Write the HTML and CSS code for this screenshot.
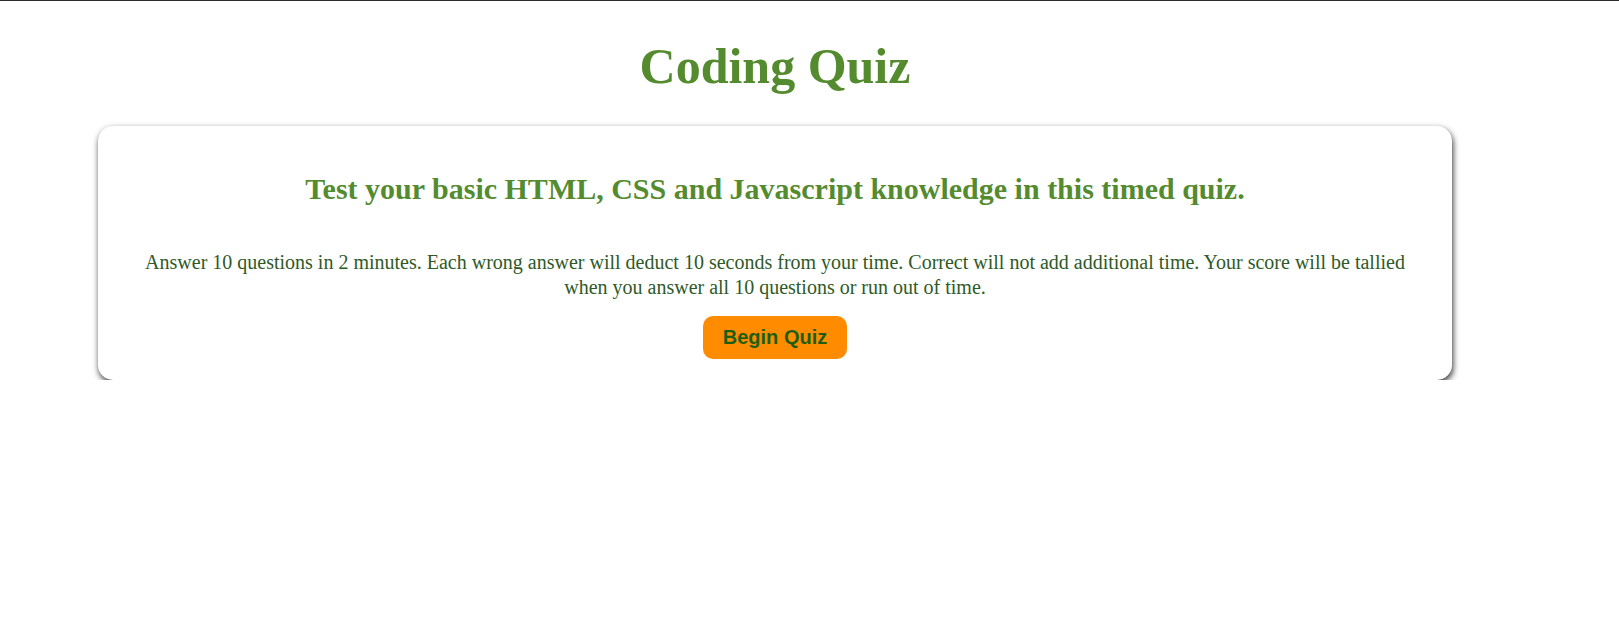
FILE: index.html
```html
<!DOCTYPE html>
<html lang="en">
<head>
<meta charset="utf-8">
<title>Coding Quiz</title>
<link rel="stylesheet" href="styles.css">
</head>
<body>
<header class="site-header">
  <h1 class="site-title">Coding Quiz</h1>
</header>
<main class="card">
  <h2 class="card-title">Test your basic HTML, CSS and Javascript knowledge in this timed quiz.</h2>
  <p class="card-text">Answer 10 questions in 2 minutes. Each wrong answer will deduct 10 seconds from your time. Correct will not add additional time. Your score will be tallied when you answer all 10 questions or run out of time.</p>
  <button class="start-btn" type="button">Begin Quiz</button>
</main>
</body>
</html>
```
FILE: styles.css
```css
html, body {
  margin: 0;
  padding: 0;
  background: #ffffff;
}

body {
  border-top: 1px solid #2b2b2b;
  font-family: "Liberation Serif", "Times New Roman", serif;
}

.site-header {
  width: 1354px;
  margin-left: 98px;
  padding-top: 36px;
  padding-bottom: 31px;
}

.site-title {
  margin: 0;
  text-align: center;
  font-size: 50px;
  font-weight: bold;
  color: #558b2f;
}

.card {
  width: 1354px;
  box-sizing: border-box;
  margin-left: 98px;
  padding: 46px 32px 21px;
  border-radius: 15px;
  background: #ffffff;
  box-shadow: 1px 3px 6px rgba(0, 0, 0, 0.8);
  display: flex;
  flex-direction: column;
  align-items: center;
  text-align: center;
}

.card-title {
  margin: 0 0 44px;
  font-size: 30px;
  font-weight: bold;
  color: #558b2f;
}

.card-text {
  margin: 0 0 16px;
  font-size: 20px;
  line-height: 24.8px;
  color: #2e5a27;
}

.start-btn {
  height: 43px;
  padding: 0 20px;
  border: none;
  border-radius: 10px;
  background: #ff8c00;
  color: #1e5e12;
  font-family: "Liberation Sans", Arial, sans-serif;
  font-size: 20px;
  font-weight: bold;
  cursor: pointer;
}
```
